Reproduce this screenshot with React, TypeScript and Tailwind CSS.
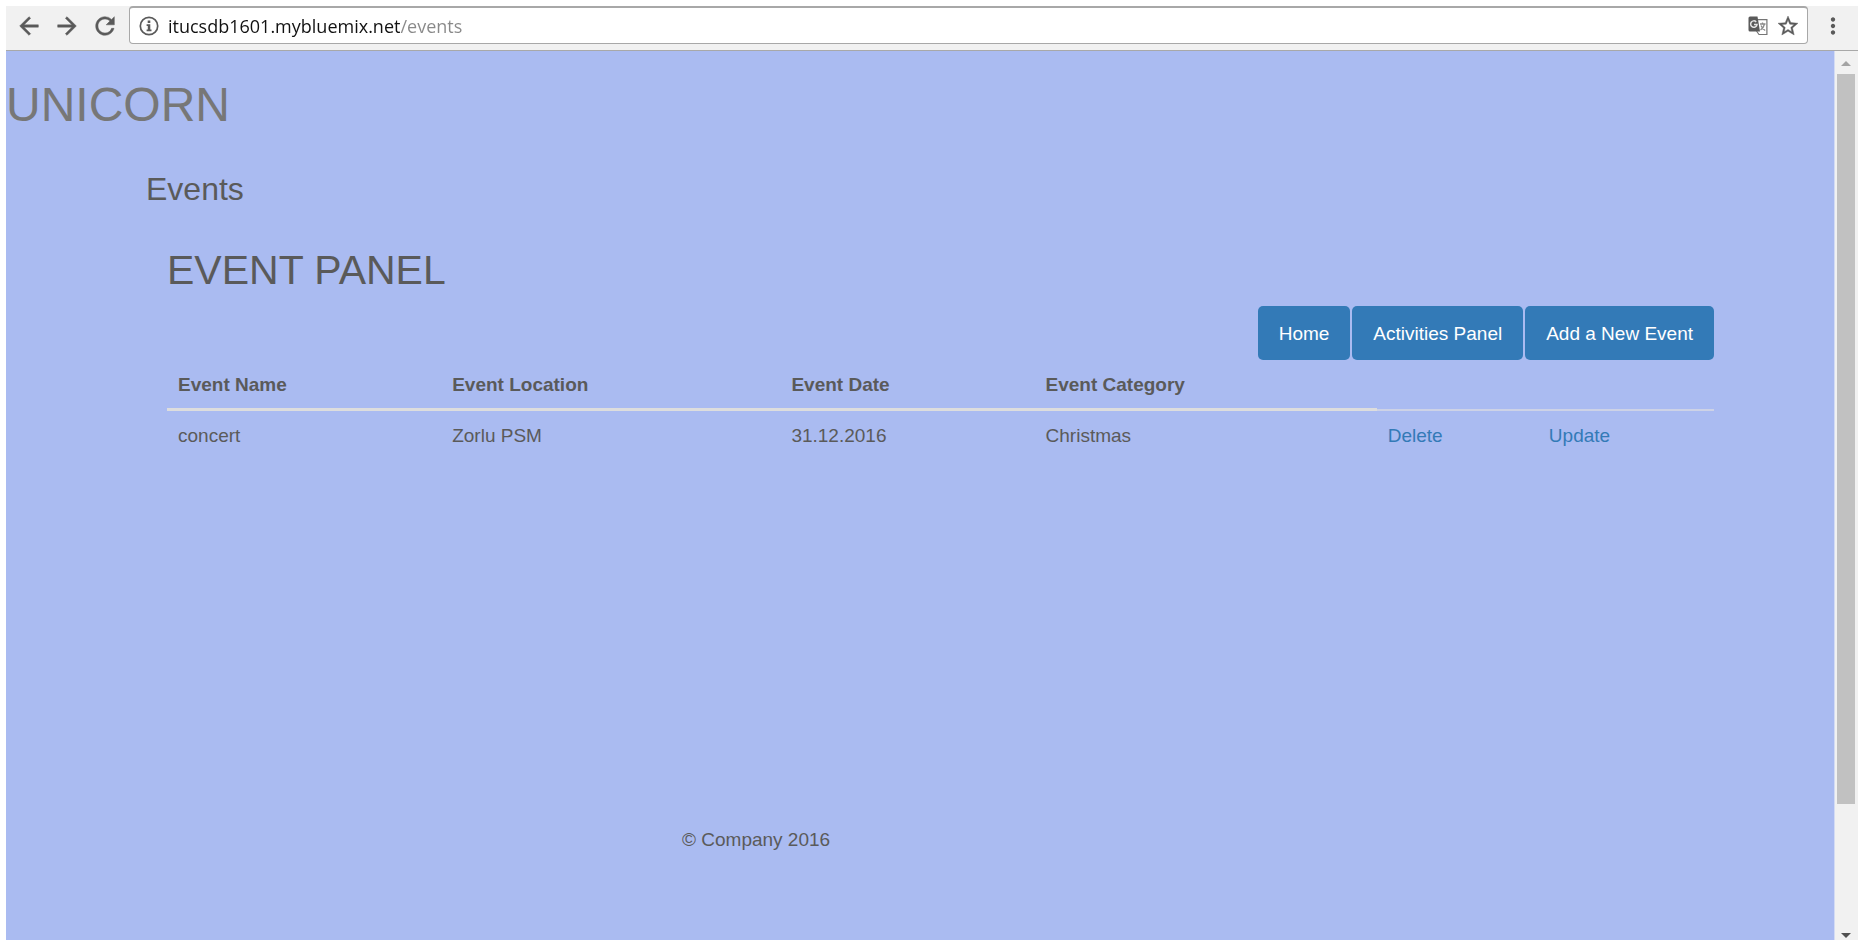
import React from "react";
import { MdMoreVert } from "react-icons/md";

const events = [{ name: "concert", location: "Zorlu PSM", date: "31.12.2016", category: "Christmas" }];

const actions = ["Home", "Activities Panel", "Add a New Event"];

const icons = {
  back: "M20 11H7.830l5.590-5.590L12 4l-8 8 8 8 1.410-1.410L7.830 13H20v-2z",
  forward: "M12 4l-1.410 1.410L16.170 11H4v2h12.170l-5.580 5.590L12 20l8-8z",
  reload:
    "M17.650 6.350A7.958 7.958 0 0 0 12 4c-4.420 0-7.990 3.580-7.990 8s3.570 8 7.990 8c3.730 0 6.840-2.550 7.730-6h-2.080A5.990 5.990 0 0 1 12 18c-3.310 0-6-2.690-6-6s2.690-6 6-6c1.660 0 3.140.69 4.220 1.780L13 11h7V4l-2.350 2.350z",
  star: "M22 9.240l-7.190-.62L12 2 9.190 8.630 2 9.240l5.460 4.730L5.820 21 12 17.270 18.180 21l-1.630-7.030L22 9.240zM12 15.400l-3.760 2.270 1-4.280-3.320-2.880 4.380-.38L12 6.100l1.710 4.040 4.380.38-3.320 2.880 1 4.280L12 15.400z",
};

function Icon({ name, size }: { name: keyof typeof icons; size: number }) {
  return (
    <svg width={size} height={size} viewBox="0 0 24 24" fill="#5a5a5a" stroke="#5a5a5a" strokeWidth="0.400" aria-hidden="true">
      <path d={icons[name]} />
    </svg>
  );
}

function TranslateIcon() {
  return (
    <svg width="20" height="20" viewBox="0 0 20 20" aria-hidden="true">
      <path d="M9 3.600h9.900v14.900H11L8.500 15" fill="#fff" stroke="#757575" strokeWidth="1.200" />
      <path d="M2 .5h7.500l2.500 15H2A1.500 1.500 0 0 1 .5 14V2A1.500 1.500 0 0 1 2 .5z" fill="#5a5a5a" />
      <path d="M8.200 5.900A3.200 3.200 0 1 0 9 8.600H6" fill="none" stroke="#e4e4e4" strokeWidth="1.500" />
      <path d="M12 8h5.500M14.500 6.500V8M16.500 8c-.5 2.500-2 4.500-4 6M13 9.500c.8 2 2.200 4 4.200 5" fill="none" stroke="#8a8a8a" strokeWidth="1.300" />
    </svg>
  );
}

function InfoIcon() {
  return (
    <svg width="20" height="20" viewBox="0 0 20 20" aria-hidden="true">
      <circle cx="10" cy="10" r="8.700" fill="none" stroke="#5a5a5a" strokeWidth="1.700" />
      <path d="M8.700 4.600h2.600V7H8.700zM7.600 8.300h3.700v5.300h1.200v1.700H7.600v-1.700h1.200V10H7.600z" fill="#5a5a5a" />
    </svg>
  );
}

function Toolbar() {
  return (
    <header className="flex h-[45px] items-start border-b border-[#a8a8a8] bg-[#f1f1f1] pl-[9px] text-[#5a5a5a]">
      <div className="flex h-[39px] items-center gap-[10px]">
        <button aria-label="Back"><Icon name="back" size={28} /></button>
        <button aria-label="Forward"><Icon name="forward" size={28} /></button>
        <button aria-label="Reload"><Icon name="reload" size={28} /></button>
      </div>
      <div className="ml-[10px] flex h-[38px] flex-1 items-center rounded-[4px] border border-t-2 border-[#a8a8a8] bg-white pl-[9px] pr-[7px]">
        <InfoIcon />
        <input
          aria-label="Address"
          defaultValue="itucsdb1601.mybluemix.net/events"
          className="ml-[9px] min-w-0 flex-1 bg-[linear-gradient(to_right,#111_232px,#888_232px)] bg-clip-text font-['Open_Sans',sans-serif] text-[18px] leading-6 text-transparent outline-none"
        />
        <button aria-label="Translate" className="mr-2"><TranslateIcon /></button>
        <button aria-label="Bookmark"><Icon name="star" size={24} /></button>
      </div>
      <button aria-label="Menu" className="ml-3 mr-3 flex h-10 items-center"><MdMoreVert size={26} /></button>
    </header>
  );
}

function Scrollbar() {
  return (
    <div className="flex w-6 shrink-0 flex-col items-center border-l border-[#d3dbf4] bg-[#f1f1f1] pr-px" aria-hidden="true">
      <svg width="10" height="23" viewBox="0 0 10 23"><path d="M0 15l5-5 5 5z" fill="#a3a3a3" /></svg>
      <div className="w-[18px] flex-[730] bg-[#c1c1c1]" />
      <div className="flex-[126]" />
      <svg width="10" height="10" viewBox="0 0 10 10"><path d="M0 3h10l-5 5z" fill="#505050" /></svg>
    </div>
  );
}

export default function App() {
  return (
    <div className="flex min-h-screen flex-col bg-white pb-px pl-[6px] pt-[6px] font-['Liberation_Sans',Arial,sans-serif] text-[19px] leading-[27px] text-[#5a5a5a]">
      <Toolbar />
      <div className="flex flex-1">
        <main className="flex-1 bg-[#aabbf1]">
          <h1 className="pt-[27px] text-[48px] leading-[54px] text-[#777]">UNICORN</h1>
          <div className="pl-[139px] pr-[120px]">
            <h3 className="mt-[39px] pl-px text-[32px] leading-[36px]">Events</h3>
            <div className="pl-[22px]">
              <h2 className="mt-[40px] text-[41px] leading-[46px]">EVENT PANEL</h2>
              <div className="mt-[13px] flex justify-end gap-[2px]">
                {actions.map((label) => (
                  <button key={label} className="h-[54px] rounded-[5px] bg-[#337ab7] px-[21px] text-white">
                    {label}
                  </button>
                ))}
              </div>
              <table className="w-full table-fixed border-separate border-spacing-0 text-left">
                <colgroup>
                  <col className="w-[274px]" />
                  <col className="w-[339px]" />
                  <col className="w-[254px]" />
                  <col className="w-[342px]" />
                  <col className="w-[161px]" />
                  <col className="w-[176px]" />
                </colgroup>
                <thead>
                  <tr>
                    {["Event Name", "Event Location", "Event Date", "Event Category"].map((title) => (
                      <th key={title} className="border-b-3 border-[#ddd] px-[11px] pb-[10px] pt-[11px] font-bold">
                        {title}
                      </th>
                    ))}
                    <td className="border-b-2 border-[#cdd2e6]" />
                    <td className="border-b-2 border-[#cdd2e6]" />
                  </tr>
                </thead>
                <tbody>
                  {events.map((event) => (
                    <tr key={event.name}>
                      <td className="px-[11px] py-[11px]">{event.name}</td>
                      <td className="px-[11px] py-[11px]">{event.location}</td>
                      <td className="px-[11px] py-[11px]">{event.date}</td>
                      <td className="px-[11px] py-[11px]">{event.category}</td>
                      <td className="px-[11px] py-[11px]"><a href="#delete" className="text-[#337ab7]">Delete</a></td>
                      <td className="px-[11px] py-[11px]"><a href="#update" className="text-[#337ab7]">Update</a></td>
                    </tr>
                  ))}
                </tbody>
              </table>
            </div>
          </div>
          <footer className="pb-[77px] pl-[676px] pt-[366px]">© Company 2016</footer>
        </main>
        <Scrollbar />
      </div>
    </div>
  );
}
